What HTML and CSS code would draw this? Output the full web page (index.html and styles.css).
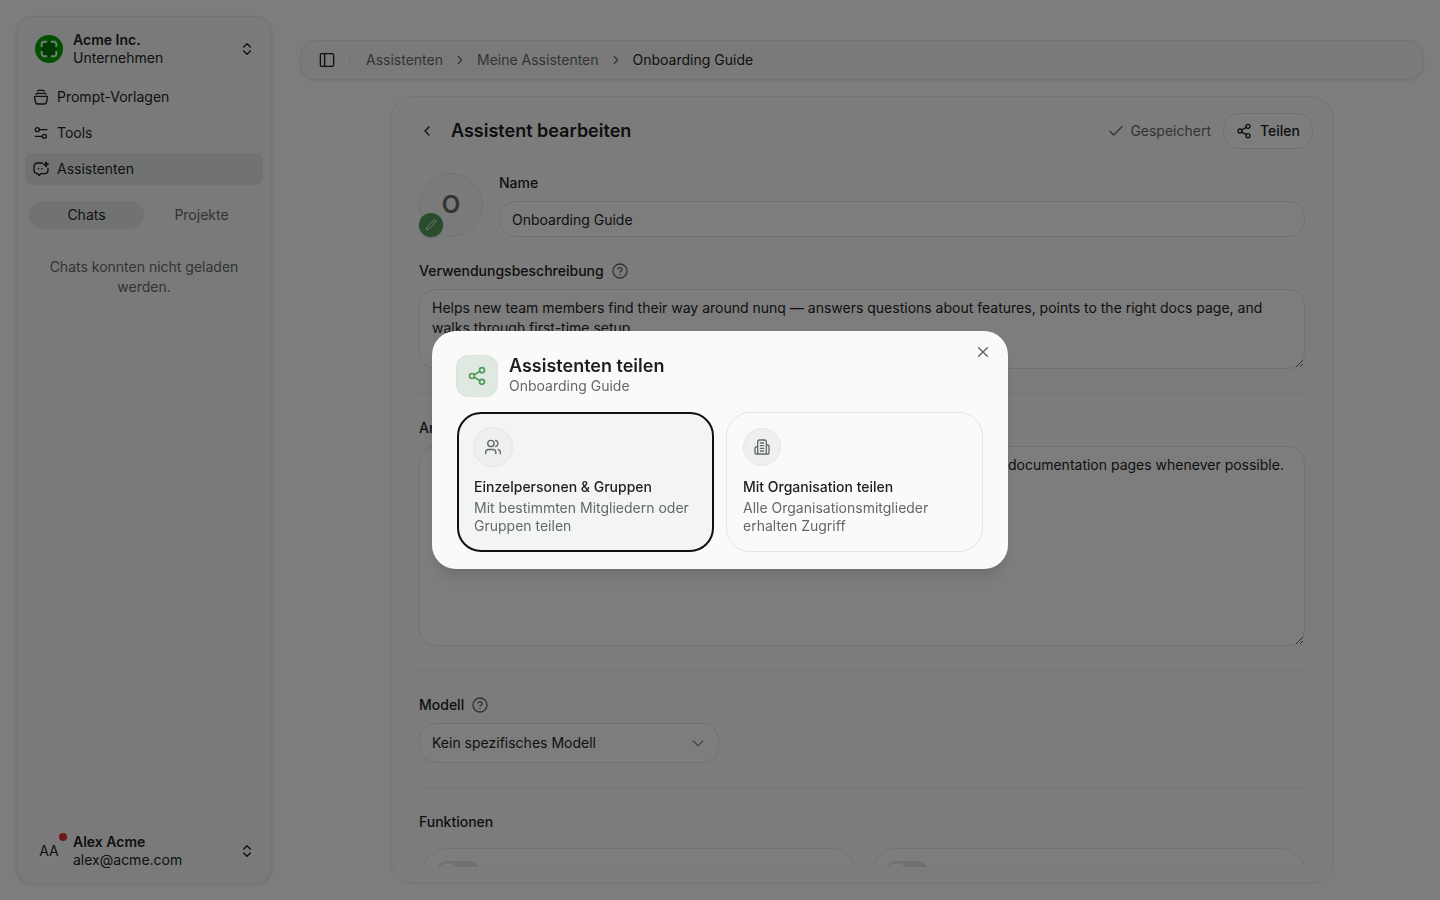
FILE: index.html
```html
<!DOCTYPE html>
<html lang="de">
<head>
<meta charset="utf-8">
<title>Assistent bearbeiten</title>
<link rel="stylesheet" href="styles.css">
</head>
<body>
<svg class="sprite" aria-hidden="true">
  <symbol id="updown" viewBox="0 0 24 24"><path d="m7 15 5 5 5-5M7 9l5-5 5 5"/></symbol>
  <symbol id="chev" viewBox="0 0 24 24"><path d="m9 18 6-6-6-6"/></symbol>
  <symbol id="share" viewBox="0 0 24 24"><circle cx="18" cy="5" r="3"/><circle cx="6" cy="12" r="3"/><circle cx="18" cy="19" r="3"/><path d="m8.600 13.500 6.800 4M15.400 6.500l-6.800 4"/></symbol>
  <symbol id="help" viewBox="0 0 24 24"><circle cx="12" cy="12" r="10.500"/><path d="M8.900 9a3.200 3.200 0 0 1 6.200 1c0 2.100-3.100 2.600-3.100 4M12 17.500h.01"/></symbol>
</svg>
<div class="app">
  <aside class="sidebar">
    <button class="account">
      <svg class="logo" viewBox="0 0 28 28"><circle class="logo-disc" cx="14" cy="14" r="14"/><path class="logo-core" d="M9 8h3.500V6h3v2H19l1 1v3.500h2v3h-2V19l-1 1h-3.500v2h-3v-2H9l-1-1v-3.500H6v-3h2V9z"/><path class="logo-mark" d="M6.700 11.300V9A2.300 2.300 0 0 1 9 6.700h2.300M16.700 6.700H19A2.300 2.300 0 0 1 21.300 9v2.300M21.300 16.700V19a2.300 2.300 0 0 1-2.300 2.300h-2.300M11.300 21.300H9A2.300 2.300 0 0 1 6.700 19v-2.300"/></svg>
      <span class="account-text"><strong>Acme Inc.</strong><span>Unternehmen</span></span>
      <svg class="icon"><use href="#updown"/></svg>
    </button>
    <nav class="nav">
      <a href="#"><svg class="icon" viewBox="0 0 24 24"><path d="M7 3.500Q7 2 8.500 2h7Q17 2 17 3.500M4.500 8Q4.500 6.500 6 6.500h12q1.500 0 1.500 1.500M3.500 11h17q1.500 0 1.300 1.500l-1.500 7Q19.700 22.500 17 22.500H7q-2.700 0-3.300-3l-1.500-7Q2 11 3.500 11z"/></svg>Prompt-Vorlagen</a>
      <a href="#"><svg class="icon" viewBox="0 0 24 24"><circle cx="6.500" cy="7" r="3"/><path d="M9.500 7H21M3.500 17h10"/><circle cx="17" cy="17" r="3"/></svg>Tools</a>
      <a href="#" class="active"><svg class="icon" viewBox="0 0 24 24"><path d="M14 3H6.500A5 5 0 0 0 1.500 8v6a5 5 0 0 0 4.500 5h1.500l1.500 3 3-3h5.500a5 5 0 0 0 5-5v-3M8 11.500h.5M13 11.500h.5"/><path d="M19.500 1.500l1 2.500 2.500 1-2.500 1-1 2.500-1-2.500L16 5l2.500-1z"/></svg>Assistenten</a>
    </nav>
    <div class="tabs"><button class="on">Chats</button><button>Projekte</button></div>
    <p class="empty">Chats konnten nicht geladen werden.</p>
    <button class="account user">
      <span class="initials">AA<i class="dot"></i></span>
      <span class="account-text"><strong>Alex Acme</strong><span>alex@acme.com</span></span>
      <svg class="icon"><use href="#updown"/></svg>
    </button>
  </aside>
  <main class="main">
    <header class="topbar">
      <button class="plain" aria-label="Seitenleiste"><svg class="icon" viewBox="0 0 24 24"><rect x="2" y="2.500" width="20" height="19" rx="2.500"/><path d="M8.500 2.500v19"/></svg></button>
      <span class="sep"></span>
      <nav class="crumbs"><a href="#">Assistenten</a><svg class="icon small"><use href="#chev"/></svg><a href="#">Meine Assistenten</a><svg class="icon small"><use href="#chev"/></svg><span>Onboarding Guide</span></nav>
    </header>
    <section class="card">
      <div class="card-head">
        <button class="plain" aria-label="Zurück"><svg class="icon" viewBox="0 0 24 24"><path d="m15 18-6-6 6-6"/></svg></button>
        <h1>Assistent bearbeiten</h1>
        <span class="saved"><svg class="icon" viewBox="0 0 24 24"><path d="M3 12.500 8.500 18 21 5.500"/></svg>Gespeichert</span>
        <button class="share-btn"><svg class="icon"><use href="#share"/></svg>Teilen</button>
      </div>
      <div class="form">
        <div class="identity">
          <div class="avatar">O<button class="edit" aria-label="Bild bearbeiten"><svg viewBox="0 0 24 24"><path d="M21.200 6.800a2.800 2.800 0 0 0-4-4L4 16l-2 6 6-2zM15 5l4 4"/></svg></button></div>
          <div class="name-field"><label for="name">Name</label><input id="name" value="Onboarding Guide"></div>
        </div>
        <div class="label-row"><label for="desc">Verwendungsbeschreibung</label><svg class="icon help"><use href="#help"/></svg></div>
        <textarea id="desc" class="desc">Helps new team members find their way around nunq — answers questions about features, points to the right docs page, and walks through first-time setup.</textarea>
        <hr>
        <div class="label-row"><label for="instr">Anweisungen</label><svg class="icon help"><use href="#help"/></svg></div>
        <textarea id="instr" class="instr">You are the nunq assistant. Answer questions briefly and concisely and link to relevant documentation pages whenever possible.</textarea>
        <hr>
        <div class="label-row"><label for="model">Modell</label><svg class="icon help"><use href="#help"/></svg></div>
        <div class="select"><select id="model"><option>Kein spezifisches Modell</option></select><svg class="icon" viewBox="0 0 24 24"><path d="m5 9 7 7 7-7"/></svg></div>
        <hr>
        <h2>Funktionen</h2>
        <div class="features"><div class="feature"><input type="checkbox" class="switch" aria-label="Funktion 1"></div><div class="feature"><input type="checkbox" class="switch" aria-label="Funktion 2"></div></div>
      </div>
    </section>
  </main>
</div>
<div class="overlay">
  <div class="dialog" role="dialog" aria-modal="true" aria-labelledby="dlg-title">
    <button class="close" aria-label="Schließen"><svg class="icon" viewBox="0 0 24 24"><path d="M5.500 5.500l13 13M18.500 5.500l-13 13"/></svg></button>
    <div class="dialog-head">
      <span class="badge"><svg class="icon"><use href="#share"/></svg></span>
      <div><h2 id="dlg-title">Assistenten teilen</h2><p>Onboarding Guide</p></div>
    </div>
    <div class="options">
      <button class="option chosen">
        <span class="round"><svg class="icon" viewBox="0 0 24 24"><circle cx="9" cy="7" r="4.500"/><path d="M16 21.500v-2a4 4 0 0 0-4-4H5.500a4 4 0 0 0-4 4v2M16 2.700a4.500 4.500 0 0 1 0 8.600M22.500 21.500v-2a4 4 0 0 0-3-3.900"/></svg></span>
        <strong>Einzelpersonen &amp; Gruppen</strong><span class="sub">Mit bestimmten Mitgliedern oder Gruppen teilen</span>
      </button>
      <button class="option">
        <span class="round"><svg class="icon" viewBox="0 0 24 24"><path d="M5.500 22.500v-18a3 3 0 0 1 3-3h7a3 3 0 0 1 3 3v18zM5.500 12h-2a2 2 0 0 0-2 2v6.500a2 2 0 0 0 2 2h17a2 2 0 0 0 2-2V11a2 2 0 0 0-2-2h-2M9.500 6h5M9.500 10h5M9.500 14h5M9.500 18h5"/></svg></span>
        <strong>Mit Organisation teilen</strong><span class="sub">Alle Organisationsmitglieder erhalten Zugriff</span>
      </button>
    </div>
  </div>
</div>
</body>
</html>
```
FILE: styles.css
```css
* { box-sizing: border-box; }
body { margin: 0; background: #fafafa; color: #1c1f1e; font: 14px/20px Inter, sans-serif; }
button, input, select, textarea { font: inherit; color: inherit; }
button { background: none; border: 0; padding: 0; cursor: pointer; }
a { color: inherit; text-decoration: none; }
h1, h2, p { margin: 0; }
strong, label { font-weight: 500; }
.sprite { display: none; }
.icon { width: 16px; height: 16px; flex: none; fill: none; stroke: currentColor; stroke-width: 2; stroke-linecap: round; stroke-linejoin: round; }
.app { display: flex; height: 100vh; padding: 16px; gap: 28px; overflow: hidden; }

.sidebar { display: flex; flex-direction: column; width: 256px; flex: none; padding: 8px; background: #f4f4f4; border: 1px solid #e4e6e5; border-radius: 16px; box-shadow: 0 1px 3px rgba(0,0,0,.1); }
.account { display: flex; align-items: center; gap: 10px; height: 48px; padding: 0 8px 0 10px; text-align: left; }
.account-text { display: flex; flex-direction: column; flex: 1; line-height: 18px; }
.account-text strong { font-weight: 600; }
.logo { width: 28px; height: 28px; flex: none; }
.logo-disc { fill: #00a000; }
.logo-core { fill: #007400; }
.logo-mark { fill: none; stroke: #e8f5e8; stroke-width: 2; stroke-linecap: round; }
.nav { display: flex; flex-direction: column; gap: 4px; margin-top: 8px; }
.nav a { display: flex; align-items: center; gap: 8px; height: 32px; padding: 0 8px; border-radius: 8px; }
.nav .active { background: #e2e6e4; }
.tabs { display: grid; grid-template-columns: 1fr 1fr; margin: 16px 4px 0; }
.tabs button { height: 28px; border-radius: 14px; color: #646967; }
.tabs .on { background: #e2e6e4; color: inherit; }
.empty { padding: 28px 16px 0; text-align: center; color: #646967; }
.user { margin-top: auto; }
.initials { position: relative; display: grid; place-items: center; width: 28px; height: 28px; border-radius: 50%; background: #f6f6f6; }
.dot { position: absolute; top: -4px; right: -4px; width: 8px; height: 8px; border-radius: 50%; background: #dc3535; }

.main { display: flex; flex-direction: column; flex: 1; gap: 16px; padding-top: 24px; min-width: 0; }
.topbar { display: flex; align-items: center; height: 40px; flex: none; padding: 0 18px; background: #f4f4f4; border: 1px solid #e4e6e5; border-radius: 16px; box-shadow: 0 1px 2px rgba(0,0,0,.08); }
.plain { display: grid; place-items: center; width: 16px; height: 16px; }
.sep { width: 1px; height: 16px; margin: 0 16px 0 14px; background: #e0e2e1; }
.crumbs { display: flex; align-items: center; gap: 10px; color: #646967; }
.crumbs span { color: #1c1f1e; }
.small { width: 14px; height: 14px; }
.card { display: flex; flex-direction: column; flex: 1; min-height: 0; width: 100%; max-width: 944px; margin: 0 auto; padding: 16px 20px; background: #f8f8f8; border: 1px solid #e4e6e5; border-radius: 24px; }
.card-head { display: flex; align-items: center; height: 36px; flex: none; padding-left: 8px; }
h1 { flex: 1; margin-left: 16px; font-size: 18px; line-height: 28px; font-weight: 600; }
.saved { display: flex; align-items: center; gap: 6px; margin-right: 12px; color: #646967; }
.share-btn { display: flex; align-items: center; gap: 8px; height: 36px; padding: 0 12px; border: 1px solid #e1e3e2; border-radius: 16px; background: #fafafa; font-weight: 500; }
.form { flex: 1; min-height: 0; overflow: hidden; padding: 24px 8px 0; }
.identity { display: flex; gap: 16px; }
.avatar { position: relative; display: grid; place-items: center; width: 64px; height: 64px; border: 1px solid #e4e6e5; border-radius: 50%; background: #f4f4f4; color: #646967; font-size: 24px; font-weight: 600; }
.edit { position: absolute; left: -1px; bottom: -1px; display: grid; place-items: center; width: 24px; height: 24px; border-radius: 50%; background: #53995a; box-shadow: 0 1px 2px rgba(0,0,0,.15); }
.edit svg { width: 12px; height: 12px; fill: none; stroke: #fff; stroke-width: 1.500; }
.name-field { flex: 1; display: flex; flex-direction: column; gap: 8px; }
input:not(.switch), textarea, select { width: 100%; border: 1px solid #e1e3e2; border-radius: 16px; background: #fafafa; outline: 0; }
input:not(.switch) { height: 36px; padding: 0 12px; }
textarea { display: block; padding: 8px 12px; resize: vertical; overflow: hidden; }
.label-row { display: flex; align-items: center; gap: 8px; margin: 24px 0 8px; }
.help { color: #646967; }
.desc { height: 80px; }
.instr { height: 200px; }
hr { height: 1px; margin: 24px 0; border: 0; background: #e4e6e5; }
.select { position: relative; width: 300px; }
select { appearance: none; height: 40px; padding: 0 12px; }
.select .icon { position: absolute; right: 13px; top: 12px; color: #8a8e8c; }
.form h2 { font-size: 14px; font-weight: 500; line-height: 20px; }
.features { display: grid; grid-template-columns: 1fr 1fr; gap: 16px; margin-top: 16px; padding-left: 4px; }
.feature { height: 96px; padding: 12px; border: 1px solid #e4e6e5; border-radius: 24px; background: #fafafa; }
.switch { appearance: none; width: 44px; height: 24px; margin: 0; padding: 2px; border-radius: 12px; background: #dfe1e0; }
.switch::before { content: ""; display: block; width: 20px; height: 20px; border-radius: 50%; background: #fafafa; }

.overlay { position: fixed; inset: 0; display: grid; place-items: center; background: rgba(0,0,0,.5); }
.dialog { position: relative; width: 576px; max-width: calc(100% - 32px); padding: 24px 24px 17px; border-radius: 24px; background: #fafafa; box-shadow: 0 10px 15px -3px rgba(0,0,0,.1), 0 4px 6px -4px rgba(0,0,0,.1); }
.close { position: absolute; top: 13px; right: 17px; width: 16px; height: 16px; color: #5c605e; }
.close .icon { display: block; }
.dialog-head { display: flex; align-items: center; gap: 11px; }
.dialog-head h2 { font-size: 18px; line-height: 20px; font-weight: 600; }
.dialog-head p { color: #646967; }
.badge { display: grid; place-items: center; width: 42px; height: 42px; border: 1px solid #d5e5d7; border-radius: 12px; background: #e0e9e1; color: #4f9a59; }
.badge .icon { width: 20px; height: 20px; }
.options { display: grid; grid-template-columns: 1fr 1fr; gap: 12px; margin-top: 15px; padding: 0 1px; }
.option { display: flex; flex-direction: column; align-items: flex-start; min-height: 140px; padding: 15px 16px; border: 1px solid #e4e6e5; border-radius: 24px; text-align: left; }
.chosen { border: 2px solid #111; padding: 14px 15px; background: #f3f5f2; }
.round { display: grid; place-items: center; width: 38px; height: 38px; margin-bottom: 11px; border: 1px solid #e4e6e5; border-radius: 50%; background: #eef0ef; color: #646967; }
.chosen .round { transform: scale(1.05); }
.option .sub { margin-top: 2px; line-height: 18px; color: #646967; }
```
